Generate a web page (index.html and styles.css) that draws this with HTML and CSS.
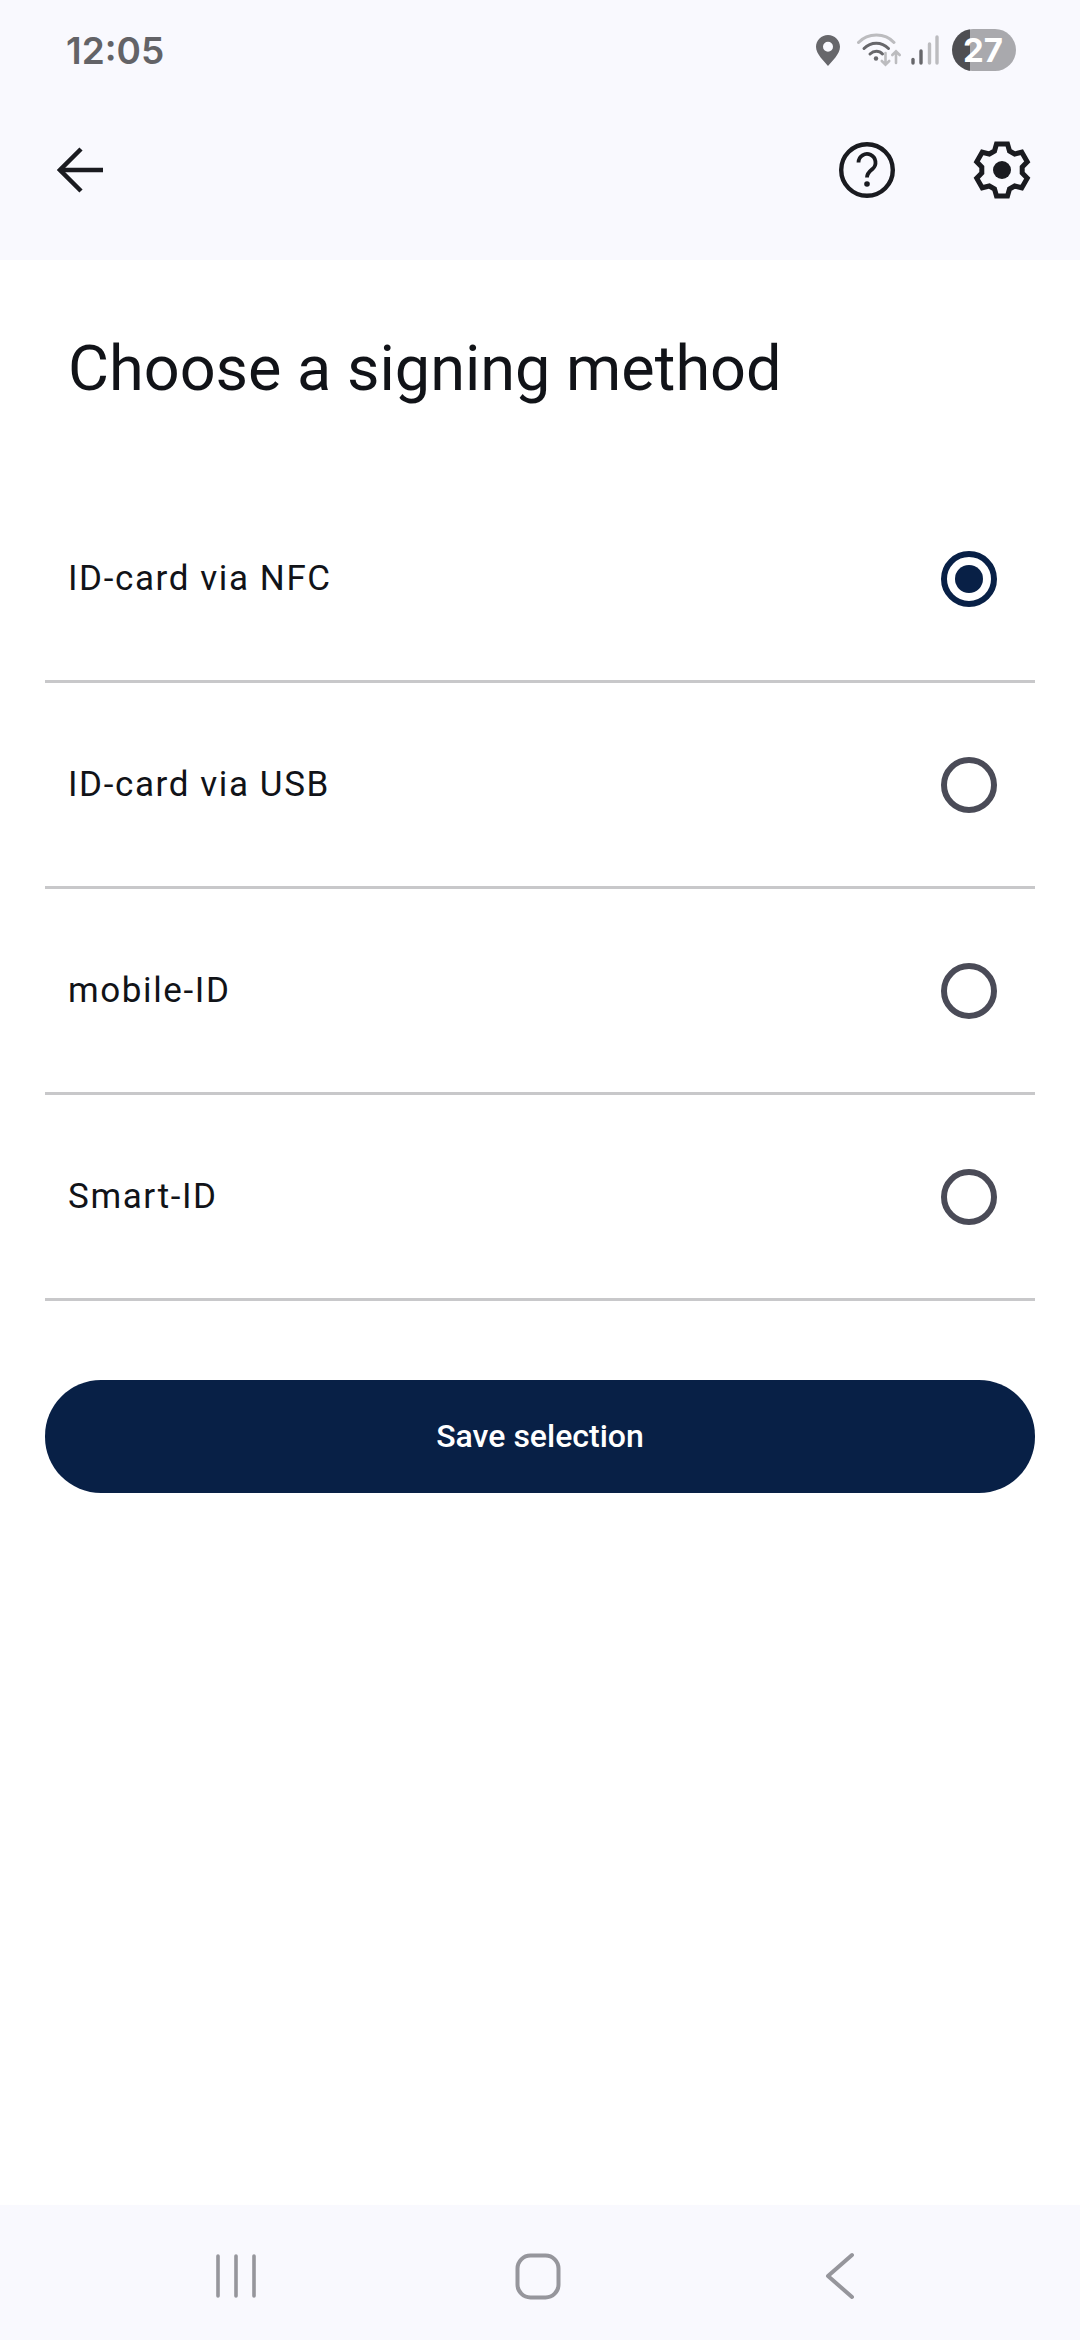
FILE: index.html
```html
<!DOCTYPE html>
<html lang="en">
<head>
  <meta charset="UTF-8" />
  <meta name="viewport" content="width=device-width, initial-scale=1" />
  <title>Choose a signing method</title>
  <link rel="stylesheet" href="styles.css">
</head>
<body>

  <div class="page">
    <header class="top">
      <div class="statusbar">
        <span class="time">12:05</span>
        <div class="status-icons">
          <svg class="ic-pin" width="24" height="31" viewBox="0 0 24 31">
            <path fill="#67676b" fill-rule="evenodd" d="M12 0C5.4 0 0 5.2 0 11.8c0 4 2 7.200 4.600 10.600L12 31l7.400-8.600C22 19 24 15.800 24 11.800 24 5.200 18.600 0 12 0zm0 6.800a5 5 0 1 1 0 10 5 5 0 0 1 0-10z"/>
          </svg>
          <svg class="ic-wifi" width="46" height="34" viewBox="0 0 46 34" fill="none" stroke-linecap="round">
            <path d="M1.500 9.500C11 -0.500 28 -0.500 37 9.500" stroke="#bcbcbf" stroke-width="3"/>
            <path d="M7 15.500C14 8.500 24.500 8.500 31.500 15.500" stroke="#67676b" stroke-width="3"/>
            <path d="M13 21C17 17.200 22 17.200 25.500 21" stroke="#67676b" stroke-width="3"/>
            <circle cx="19" cy="25.500" r="2.200" fill="#67676b"/>
            <path d="M28.500 20V31.500M24.800 28l3.700 3.700 3.700-3.700" stroke="#bcbcbf" stroke-width="2.600"/>
            <path d="M39 30V18.500M35.300 22l3.700-3.700 3.700 3.700" stroke="#bcbcbf" stroke-width="2.600"/>
          </svg>
          <svg class="ic-signal" width="28" height="30" viewBox="0 0 28 30" fill="none" stroke-linecap="round" stroke-width="3.400">
            <path d="M2 24.500V28" stroke="#67676b"/>
            <path d="M10 16V28" stroke="#67676b"/>
            <path d="M18.500 9V28" stroke="#bcbcbf"/>
            <path d="M26 2V28" stroke="#bcbcbf"/>
          </svg>
          <span class="battery">27</span>
        </div>
      </div>
      <div class="toolbar">
        <svg width="46" height="46" viewBox="0 0 46 46" fill="none" stroke="#1a1b20" stroke-width="4.500">
          <path d="M46 23H3"/>
          <path d="M24 2L3 23l21 21"/>
        </svg>
        <div class="toolbar-actions">
          <svg width="56" height="56" viewBox="0 0 56 56" fill="none" stroke="#1a1b20" stroke-width="4.400">
            <circle cx="28" cy="28" r="25.800"/>
            <path stroke-width="3.800" d="M19.500 20.500a8.500 8.500 0 1 1 14 6.500c-3 2.500-5.500 4-5.500 8.500"/>
            <circle cx="28" cy="42" r="2.800" fill="#1a1b20" stroke="none"/>
          </svg>
          <svg width="58" height="58" viewBox="-29 -29 58 58" fill="none" stroke="#1a1b20" stroke-width="5">
            <polygon points="-7.500,-19 -5.500,-26 5.500,-26 7.500,-19 12.700,-16 19.770,-17.760 25.270,-8.240 20.200,-3 20.200,3 25.270,8.240 19.770,17.760 12.700,16 7.500,19 5.500,26 -5.500,26 -7.500,19 -12.700,16 -19.770,17.760 -25.270,8.240 -20.200,3 -20.200,-3 -25.270,-8.240 -19.770,-17.760 -12.700,-16"/>
            <circle r="9" fill="#1a1b20" stroke="none"/>
          </svg>
        </div>
      </div>
    </header>

    <main class="content">
      <h1 class="title">Choose a signing method</h1>

      <ul class="methods">
        <li class="method">
          <span>ID-card via NFC</span>
          <span class="radio radio-on"></span>
        </li>
        <li class="method">
          <span>ID-card via USB</span>
          <span class="radio"></span>
        </li>
        <li class="method">
          <span>mobile-ID</span>
          <span class="radio"></span>
        </li>
        <li class="method">
          <span>Smart-ID</span>
          <span class="radio"></span>
        </li>
      </ul>

      <button class="save" type="button">Save selection</button>
    </main>

    <nav class="navbar">
      <div class="nav-slot">
        <svg width="42" height="44" viewBox="0 0 42 44" fill="none" stroke="#96969c" stroke-width="3.600" stroke-linecap="round">
          <path d="M3 2V42M21 2V42M39 2V42"/>
        </svg>
      </div>
      <div class="nav-slot">
        <svg width="46" height="47" viewBox="0 0 46 47" fill="none" stroke="#96969c" stroke-width="4">
          <rect x="2.500" y="2.500" width="41" height="42" rx="13"/>
        </svg>
      </div>
      <div class="nav-slot">
        <svg width="30" height="48" viewBox="0 0 30 48" fill="none" stroke="#96969c" stroke-width="4" stroke-linecap="round" stroke-linejoin="round">
          <path d="M27 3L3 24l24 21"/>
        </svg>
      </div>
    </nav>
  </div>

</body>
</html>
```

FILE: styles.css
```css
* {
  box-sizing: border-box;
}
body {
  margin: 0;
  background: white;
  font-family: Roboto, 'Noto Sans', sans-serif;
}
.page {
  width: 1080px;
  height: 2340px;
  display: flex;
  flex-direction: column;
  overflow: hidden;
}
.top {
  height: 260px;
  background: #f9f9fe;
  flex-shrink: 0;
}
.statusbar {
  height: 100px;
  padding: 0 64px 0 66px;
  display: flex;
  align-items: center;
  justify-content: space-between;
}
.time {
  font-family: Inter, Roboto, sans-serif;
  font-size: 37px;
  font-weight: 600;
  color: #636367;
}
.status-icons {
  display: flex;
  align-items: center;
}
.ic-pin {
  margin-right: 17px;
}
.ic-signal {
  margin-left: 8px;
}
.battery {
  width: 64px;
  height: 42px;
  margin-left: 13px;
  border-radius: 21px;
  background: linear-gradient(to right, #4e4e52 0, #4e4e52 18px, #a9a9ad 18px);
  color: white;
  font-family: Inter, Roboto, sans-serif;
  font-size: 33px;
  font-weight: 700;
  line-height: 42px;
  text-align: right;
  padding-right: 13px;
}
.toolbar {
  height: 160px;
  padding: 0 49px 20px 57px;
  display: flex;
  align-items: center;
  justify-content: space-between;
}
.toolbar-actions {
  display: flex;
  align-items: center;
  gap: 78px;
}
.content {
  flex: 1;
  padding: 0 45px;
}
.title {
  margin: 0;
  height: 217px;
  padding: 0 0 0 23px;
  display: flex;
  align-items: center;
  font-size: 63px;
  font-weight: 400;
  color: #111318;
}
.methods {
  list-style: none;
  margin: 0;
  padding: 0;
}
.method {
  height: 206px;
  padding: 0 38px 0 23px;
  border-bottom: 3px solid #c8c8ca;
  display: flex;
  align-items: center;
  justify-content: space-between;
  font-size: 35px;
  letter-spacing: 1.6px;
  color: #111318;
}
.radio {
  width: 56px;
  height: 56px;
  border: 6px solid #4a4b57;
  border-radius: 50%;
  display: flex;
  align-items: center;
  justify-content: center;
}
.radio-on {
  border-color: #082046;
}
.radio-on::after {
  content: '';
  width: 28px;
  height: 28px;
  border-radius: 50%;
  background: #082046;
}
.save {
  display: block;
  width: 100%;
  height: 113px;
  margin-top: 79px;
  padding: 0 0 2px;
  border: none;
  border-radius: 56px;
  background: #082046;
  color: white;
  font-family: inherit;
  font-size: 32px;
  font-weight: 500;
}
.navbar {
  height: 135px;
  background: #f9f9fe;
  flex-shrink: 0;
  padding: 7px 4px 0 0;
  display: grid;
  grid-template-columns: repeat(3, 302px);
  justify-content: center;
  align-items: center;
}
.nav-slot {
  display: flex;
  justify-content: center;
}
```
